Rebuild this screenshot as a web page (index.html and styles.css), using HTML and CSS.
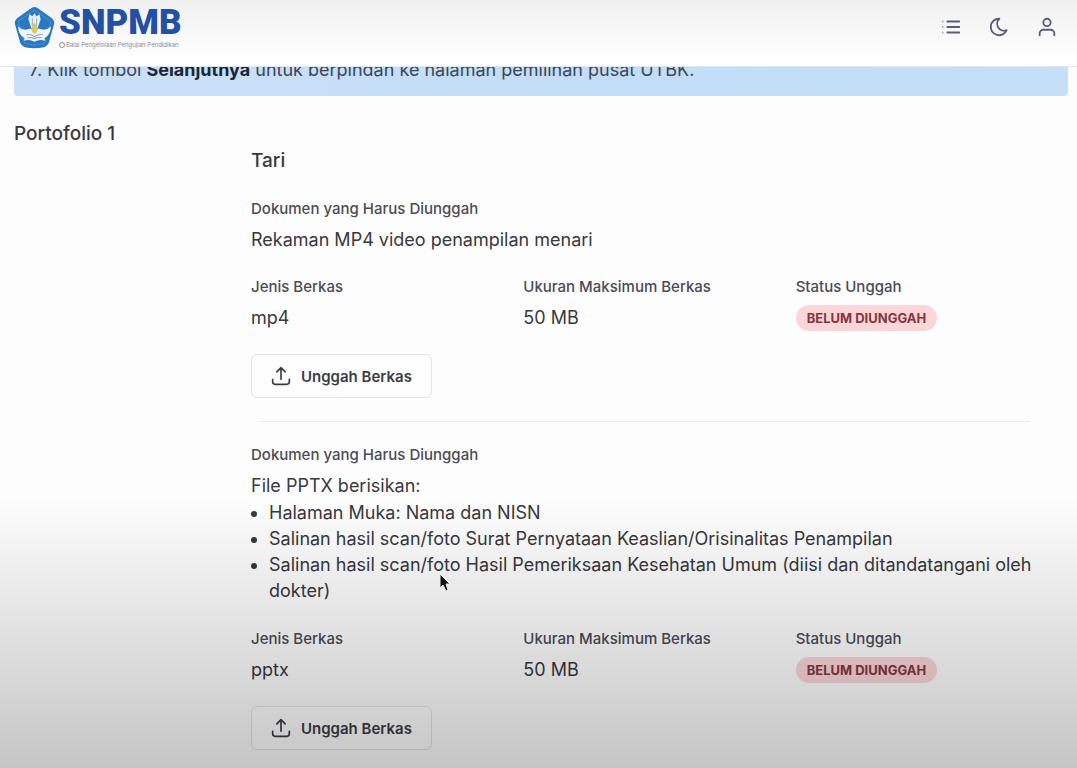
FILE: index.html
```html
<!DOCTYPE html>
<html lang="id">
<head>
  <meta charset="UTF-8">
  <meta name="viewport" content="width=device-width, initial-scale=1.0">
  <title>SNPMB - Portofolio</title>
  <link rel="stylesheet" href="styles.css">
</head>
<body>
  <header class="topbar">
    <a class="brand" href="#">
      <svg class="brand-emblem" viewBox="0 0 40 42" aria-hidden="true">
        <path d="M17 2 Q20 0 23 2 L37 12 Q40 15 39 18 L34 36 Q32 40 28 40.500 Q20 42 12 40.500 Q8 40 6 36 L1 18 Q0 15 3 12 Z" fill="#2b78c2"/>
        <path d="M20 4 L36 15 L30 36 Q20 40 10 36 L4 15 Z" fill="none" stroke="#4a90d0" stroke-width="1"/>
        <path d="M15 8 L18 10 L20 7 L22 10 L25 8 L26 13 L23 22 L17 22 L14 13 Z" fill="#e4edf2"/>
        <path d="M4 20 Q9 25 16 22 L20 25 L24 22 Q31 25 36 20 Q36 28 30 31 L30 34 Q25 32 20 35 Q15 32 10 34 L10 31 Q4 28 4 20 Z" fill="#f1f5f6"/>
        <path d="M18 12 V20 M22 12 V20" stroke="#9db9cc" stroke-width="1"/>
        <path d="M20 16 Q24 21 22 26 Q20 28 18 26 Q16 21 20 16 Z" fill="#d8ca62"/>
        <path d="M12 28 Q16 27 20 30 Q24 27 28 28 M13 31 Q17 30 20 32 Q23 30 27 31" fill="none" stroke="#8aa5b8" stroke-width="1"/>
      </svg>
      <span class="brand-text">
        <span class="brand-name">SNPMB</span>
        <span class="brand-sub"><span class="brand-ring"></span>Balai Pengelolaan Pengujian Pendidikan</span>
      </span>
    </a>
    <nav class="actions">
      <button class="icon-button" type="button" aria-label="Menu">
        <svg viewBox="0 0 24 24"><path d="M8 6h13M8 12h13M8 18h13"/><path d="M3 6h.01M3 12h.01M3 18h.01" opacity="0.5"/></svg>
      </button>
      <button class="icon-button" type="button" aria-label="Mode gelap">
        <svg viewBox="0 0 24 24"><path d="M12 3h.393a7.500 7.500 0 0 0 7.920 12.446A9 9 0 1 1 12 2.992z"/></svg>
      </button>
      <button class="icon-button" type="button" aria-label="Akun">
        <svg viewBox="0 0 24 24"><circle cx="12" cy="7" r="4"/><path d="M4 21v-2a4 4 0 0 1 4-4h8a4 4 0 0 1 4 4v2"/></svg>
      </button>
    </nav>
  </header>

  <main class="page">
    <div class="notice">7. Klik tombol <strong>Selanjutnya</strong> untuk berpindah ke halaman pemilihan pusat UTBK.</div>

    <section class="portfolio">
      <h2 class="portfolio-title">Portofolio 1</h2>
      <div class="portfolio-body">
        <h3 class="portfolio-name">Tari</h3>

        <article class="document">
          <p class="label">Dokumen yang Harus Diunggah</p>
          <div class="value">Rekaman MP4 video penampilan menari</div>
          <dl class="details">
            <div>
              <dt class="label">Jenis Berkas</dt>
              <dd class="value">mp4</dd>
            </div>
            <div>
              <dt class="label">Ukuran Maksimum Berkas</dt>
              <dd class="value">50 MB</dd>
            </div>
            <div>
              <dt class="label">Status Unggah</dt>
              <dd class="value"><span class="badge">BELUM DIUNGGAH</span></dd>
            </div>
          </dl>
          <button class="upload-button" type="button">
            <svg viewBox="0 0 24 24"><path d="M2 16v3a3 3 0 0 0 3 3h14a3 3 0 0 0 3-3v-3M7 7l5-5 5 5M12 2v14"/></svg>
            Unggah Berkas
          </button>
        </article>

        <hr class="divider">

        <article class="document">
          <p class="label">Dokumen yang Harus Diunggah</p>
          <div class="value">
            File PPTX berisikan:
            <ul class="requirements">
              <li>Halaman Muka: Nama dan NISN</li>
              <li>Salinan hasil scan/foto Surat Pernyataan Keaslian/Orisinalitas Penampilan</li>
              <li>Salinan hasil scan/foto Hasil Pemeriksaan Kesehatan Umum (diisi dan ditandatangani oleh dokter)</li>
            </ul>
          </div>
          <dl class="details">
            <div>
              <dt class="label">Jenis Berkas</dt>
              <dd class="value">pptx</dd>
            </div>
            <div>
              <dt class="label">Ukuran Maksimum Berkas</dt>
              <dd class="value">50 MB</dd>
            </div>
            <div>
              <dt class="label">Status Unggah</dt>
              <dd class="value"><span class="badge">BELUM DIUNGGAH</span></dd>
            </div>
          </dl>
          <button class="upload-button" type="button">
            <svg viewBox="0 0 24 24"><path d="M2 16v3a3 3 0 0 0 3 3h14a3 3 0 0 0 3-3v-3M7 7l5-5 5 5M12 2v14"/></svg>
            Unggah Berkas
          </button>
        </article>
      </div>
    </section>
  </main>

  <div class="shade"></div>
  <svg class="pointer" viewBox="0 0 12 19" aria-hidden="true">
    <path d="M1 1v14l3-3 3 6 2-1-2-6h4z" fill="#111" stroke="#eee" stroke-width="1"/>
  </svg>
</body>
</html>
```
FILE: styles.css
```css
/* General */
* {
  box-sizing: border-box;
}

body {
  margin: 0;
  background-color: #fdfdfe;
  color: #38383e;
  font-family: Inter, "Liberation Sans", sans-serif;
  font-size: 18px;
  line-height: 26px;
}

h2,
h3,
p,
dl,
dd,
ul {
  margin: 0;
}

/* Top bar */
.topbar {
  position: fixed;
  top: 0;
  left: 0;
  right: 0;
  z-index: 10;
  display: flex;
  align-items: flex-start;
  justify-content: space-between;
  height: 67px;
  padding: 6px 19px 0 14px;
  background: linear-gradient(#f0f0f0, #fff 60px);
  border-bottom: 1px solid #e3e6ea;
}

.brand {
  display: flex;
  gap: 4px;
  text-decoration: none;
}

.brand-emblem {
  width: 41px;
  height: 43px;
}

.brand-text {
  display: flex;
  flex-direction: column;
}

.brand-name {
  color: #2450a4;
  font-family: Roboto, sans-serif;
  font-size: 35px;
  font-weight: 900;
  line-height: 34px;
}

.brand-sub {
  display: flex;
  align-items: center;
  gap: 1px;
  color: #8a8d94;
  font-size: 6px;
  line-height: 10px;
}

.brand-ring {
  width: 6px;
  height: 6px;
  border: 1px solid #8a8d94;
  border-radius: 50%;
}

.actions {
  display: flex;
  gap: 26px;
  padding-top: 10px;
}

.icon-button {
  width: 22px;
  height: 22px;
  padding: 0;
  border: none;
  background: none;
  cursor: pointer;
}

.icon-button svg,
.upload-button svg {
  display: block;
  width: 22px;
  height: 22px;
  fill: none;
  stroke: #5a5d78;
  stroke-width: 2;
  stroke-linecap: round;
  stroke-linejoin: round;
}

/* Content */
.page {
  padding: 44px 9px 0 14px;
}

.notice {
  padding: 13px 15px;
  background: linear-gradient(90deg, #cbe0f7, #c2ddf7 60%, #c6dff8);
  border-radius: 4px;
  color: #3b4658;
}

.notice strong {
  color: #1c2536;
}

.portfolio {
  display: grid;
  grid-template-columns: 215px 1fr;
  padding-top: 25px;
}

.portfolio-title,
.portfolio-name {
  font-size: 19px;
  font-weight: 500;
}

.portfolio-name {
  margin-bottom: 2px;
}

.portfolio-body {
  padding: 27px 22px 18px;
}

.document {
  padding-top: 20px;
}

.label {
  margin-bottom: 5px;
  color: #4a4b57;
  font-size: 15px;
  font-weight: 500;
}

.details {
  display: grid;
  grid-template-columns: repeat(3, 1fr);
  gap: 22px;
  padding: 21px 0 23px;
}

.requirements {
  padding: 1px 0 1px 18px;
}

.badge {
  display: inline-block;
  padding: 0 11px;
  background-color: #fbd5d8;
  border-radius: 13px;
  color: #86353d;
  font-size: 13px;
  font-weight: 700;
  vertical-align: top;
}

.upload-button {
  display: flex;
  align-items: center;
  gap: 10px;
  height: 44px;
  padding: 0 19px;
  background-color: rgba(255, 255, 255, 0.5);
  border: 1px solid #e2e2e8;
  border-radius: 6px;
  color: #3c3c46;
  font-family: inherit;
  font-size: 15px;
  font-weight: 600;
  cursor: pointer;
}

.upload-button svg {
  width: 20px;
  height: 20px;
  stroke: #3c3c46;
}

.divider {
  height: 1px;
  margin: 23px 16px 0 8px;
  background-color: #ececf0;
  border: none;
}

/* Darkening towards the bottom of the window */
.shade {
  position: fixed;
  left: 0;
  right: 0;
  bottom: 0;
  z-index: 20;
  height: 270px;
  background: linear-gradient(transparent, rgba(0, 0, 0, 0.22));
  pointer-events: none;
}

.pointer {
  position: absolute;
  top: 573px;
  left: 439px;
  z-index: 30;
  width: 12px;
  height: 19px;
}
```
